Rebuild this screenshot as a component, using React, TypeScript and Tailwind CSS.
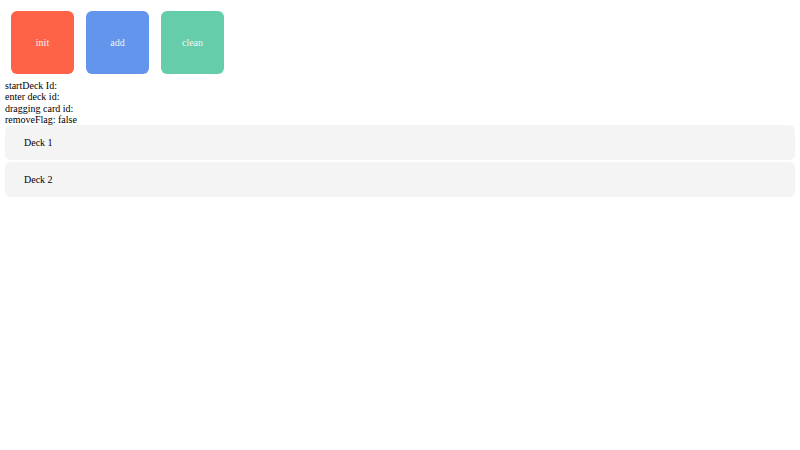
import React from "react";

const buttons = [
  { label: "init", cls: "bg-[#ff6347]" },
  { label: "add", cls: "bg-[#6495ed]" },
  { label: "clean", cls: "bg-[#66cdaa]" },
];

export default function App() {
  return (
    <div className="min-h-[450px] w-[800px] bg-white p-[5px] font-['Liberation_Serif',serif] text-[10px] leading-[11.25px] text-black">
      <div className="flex gap-[12.5px] px-[6.25px] py-[6.25px]">
        {buttons.map((b) => (
          <button
            key={b.label}
            className={`flex h-[62.5px] w-[62.5px] items-center justify-center rounded-[6px] text-[10px] text-[#f3f3f3] ${b.cls}`}
          >
            {b.label}
          </button>
        ))}
      </div>
      <div>startDeck Id:</div>
      <div>enter deck id:</div>
      <div>dragging card id:</div>
      <div>removeFlag: false</div>
      <div className="flex flex-col gap-[2px]">
        <div className="flex h-[35px] items-center rounded-[6px] bg-[#f4f4f4] pl-[19px]">Deck 1</div>
        <div className="flex h-[35px] items-center rounded-[6px] bg-[#f4f4f4] pl-[19px]">Deck 2</div>
      </div>
    </div>
  );
}
